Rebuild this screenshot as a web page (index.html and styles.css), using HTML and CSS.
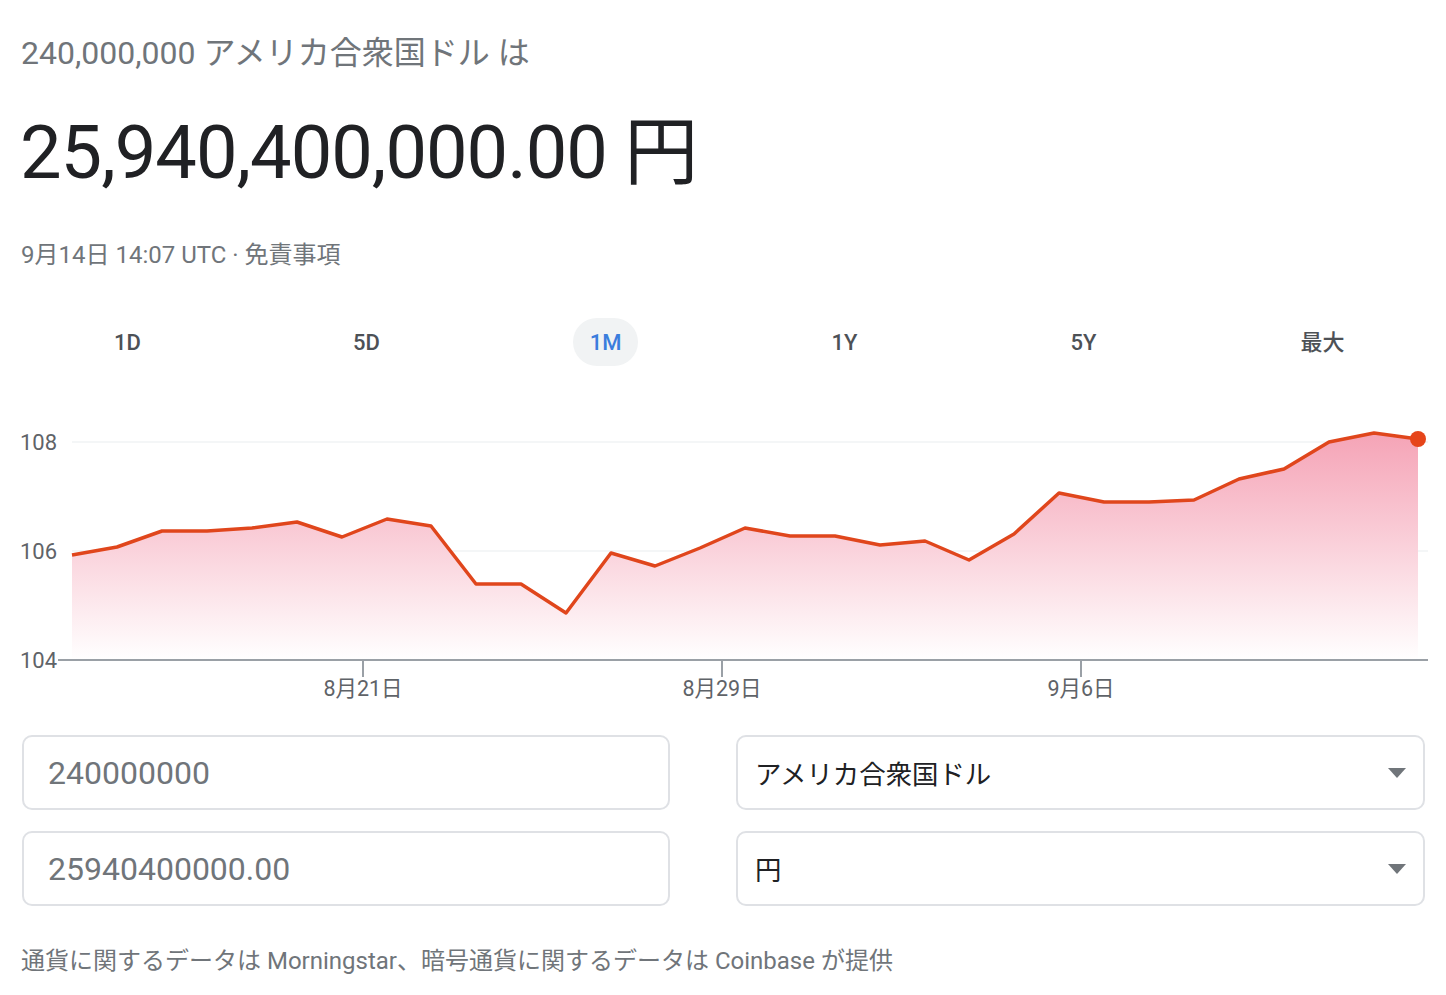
FILE: index.html
```html
<!DOCTYPE html>
<html lang="ja">
<head>
<meta charset="utf-8">
<link rel="stylesheet" href="styles.css">
</head>
<body>
<div class="page">
  <div class="src">240,000,000 アメリカ合衆国ドル は</div>
  <div class="result">25,940,400,000.00 円</div>
  <div class="stamp">9月14日 14:07 UTC · 免責事項</div>
  <div class="tabs">
    <div class="tab"><span>1D</span></div>
    <div class="tab"><span>5D</span></div>
    <div class="tab"><span class="active">1M</span></div>
    <div class="tab"><span>1Y</span></div>
    <div class="tab"><span>5Y</span></div>
    <div class="tab"><span>最大</span></div>
  </div>
  <svg class="chart" width="1446" height="320" viewBox="0 390 1446 320">
    <defs>
      <linearGradient id="fill" gradientUnits="userSpaceOnUse" x1="0" y1="433" x2="0" y2="661">
        <stop offset="0" stop-color="#f5a3b6"/>
        <stop offset="1" stop-color="#ffffff"/>
      </linearGradient>
    </defs>
    <line class="grid" x1="72" y1="443" x2="1428" y2="443"/>
    <line class="grid" x1="72" y1="552" x2="1428" y2="552"/>
    <path fill="url(#fill)" d="M72,661 L72,556 117,548 162,532 207,532 252,529 297,523 342,538 387,520 431,527 476,585 521,585 566,614 611,554 655,567 700,549 745,529 790,537 835,537 880,546 925,542 969,561 1014,535 1059,494 1104,503 1149,503 1194,501 1239,480 1284,470 1329,443 1374,434 1418,440 L1418,661 Z"/>
    <polyline class="line" points="72,556 117,548 162,532 207,532 252,529 297,523 342,538 387,520 431,527 476,585 521,585 566,614 611,554 655,567 700,549 745,529 790,537 835,537 880,546 925,542 969,561 1014,535 1059,494 1104,503 1149,503 1194,501 1239,480 1284,470 1329,443 1374,434 1418,440"/>
    <circle class="dot" cx="1418" cy="440" r="8"/>
    <line class="axis" x1="58" y1="661" x2="1428" y2="661"/>
    <line class="tick" x1="363" y1="661" x2="363" y2="678"/>
    <line class="tick" x1="722" y1="661" x2="722" y2="678"/>
    <line class="tick" x1="1081" y1="661" x2="1081" y2="678"/>
    <text class="ylab" x="20" y="451">108</text>
    <text class="ylab" x="20" y="560">106</text>
    <text class="ylab" x="20" y="669">104</text>
    <text class="xlab" x="363" y="697">8月21日</text>
    <text class="xlab" x="722" y="697">8月29日</text>
    <text class="xlab" x="1081" y="697">9月6日</text>
  </svg>
  <div class="form">
    <div class="box num">240000000</div>
    <div class="box sel"><span>アメリカ合衆国ドル</span><i class="caret"></i></div>
    <div class="box num">25940400000.00</div>
    <div class="box sel"><span>円</span><i class="caret"></i></div>
  </div>
  <div class="foot">通貨に関するデータは Morningstar、暗号通貨に関するデータは Coinbase が提供</div>
</div>
</body>
</html>
```

FILE: styles.css
```css
html, body {
  margin: 0;
  padding: 0;
  background: #ffffff;
}
body {
  font-family: Roboto, "Noto Sans CJK JP", sans-serif;
  color: #202124;
}
.page {
  width: 1446px;
  display: flex;
  flex-direction: column;
}
.src {
  margin: 35px 0 0 21px;
  font-size: 32px;
  line-height: 36px;
  color: #70757a;
}
.result {
  margin: 37px 0 0 20px;
  font-size: 74px;
  line-height: 90px;
  color: #202124;
  letter-spacing: -1px;
}
.stamp {
  margin: 42px 0 0 21px;
  font-size: 24px;
  line-height: 30px;
  color: #70757a;
}
.tabs {
  margin-top: 48px;
  padding: 0 4px 0 8px;
  display: grid;
  grid-template-columns: repeat(6, 1fr);
  height: 48px;
}
.tab {
  display: flex;
  justify-content: center;
  align-items: center;
}
.tab span {
  font-size: 22px;
  font-weight: 500;
  color: #4d5156;
  line-height: 50px;
  height: 48px;
  padding: 0 17px;
  border-radius: 24px;
}
.tab span.active {
  background: #f1f3f4;
  color: #3b7ddd;
}
.chart {
  display: block;
  margin-top: 23px;
}
.grid {
  stroke: #f1f3f4;
  stroke-width: 1.5;
}
.line {
  fill: none;
  stroke: #e0461c;
  stroke-width: 3.5;
  stroke-linejoin: round;
}
.dot {
  fill: #e6451a;
}
.axis, .tick {
  stroke: #9aa0a6;
  stroke-width: 2;
}
.ylab, .xlab {
  font-family: Roboto, "Noto Sans CJK JP", sans-serif;
  font-size: 21.5px;
  fill: #5f6368;
}
.ylab {
  font-size: 22px;
}
.xlab {
  text-anchor: middle;
}
.form {
  margin: 26px 0 0 22px;
  display: grid;
  grid-template-columns: 648px 689px;
  column-gap: 66px;
  row-gap: 21px;
}
.box {
  box-sizing: border-box;
  height: 75px;
  border: 2px solid #dfe1e5;
  border-radius: 10px;
  display: flex;
  align-items: center;
}
.num {
  padding-left: 24px;
  font-size: 32px;
  color: #70757a;
}
.sel {
  padding: 0 17px 0 17px;
  justify-content: space-between;
  font-size: 26.4px;
  color: #202124;
}
.caret {
  width: 0;
  height: 0;
  border-left: 9px solid transparent;
  border-right: 9px solid transparent;
  border-top: 10px solid #70757a;
}
.foot {
  margin: 40px 0 0 21px;
  font-size: 24px;
  line-height: 30px;
  color: #70757a;
}
```
